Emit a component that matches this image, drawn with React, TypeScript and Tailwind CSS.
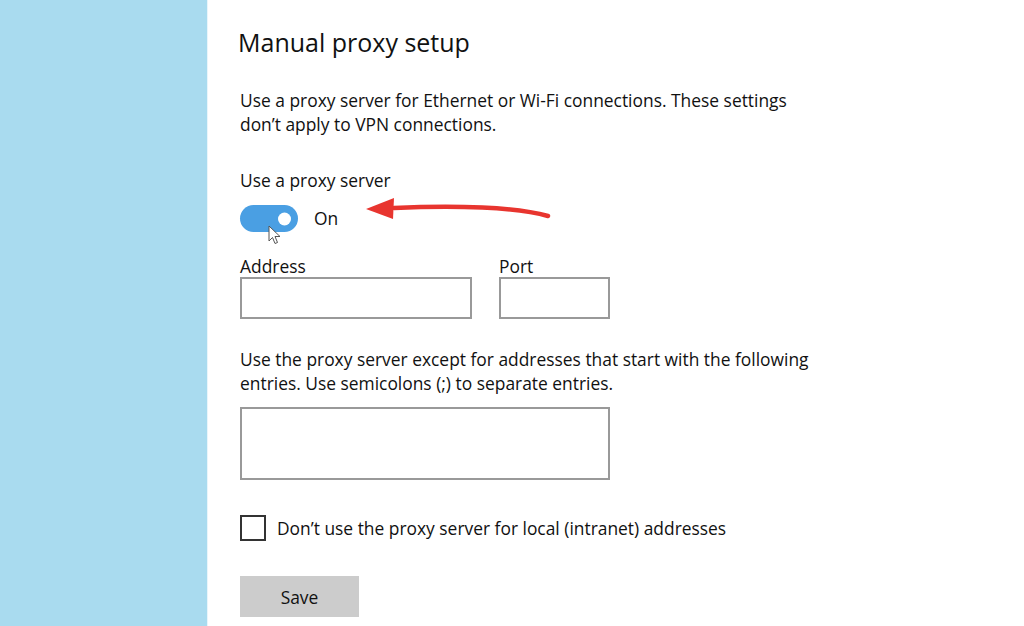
import { useState } from 'react'

const font = { fontFamily: '"Segoe UI", "Open Sans", "Noto Sans", sans-serif' }

function Toggle({ on, onChange }: { on: boolean; onChange: (v: boolean) => void }) {
  return (
    <button
      type="button"
      onClick={() => onChange(!on)}
      className={`relative flex h-[27px] w-[58px] items-center rounded-full ${on ? 'bg-[#4a9fe3]' : 'border-2 border-[#333] bg-white'}`}
    >
      <span
        className={`absolute top-1/2 h-[13px] w-[13px] -translate-y-1/2 rounded-full ${on ? 'right-[7px] bg-white' : 'left-[7px] bg-[#333]'}`}
      />
    </button>
  )
}

export default function App() {
  const [on, setOn] = useState(true)
  const [local, setLocal] = useState(false)

  return (
    <div className="flex h-[626px] w-[1024px] overflow-hidden bg-white text-[#111]" style={font}>
      <div className="h-full w-[207px] shrink-0 bg-[#a9dbef]" />
      <div className="h-full w-[1px] shrink-0 bg-[#e8f5fb]" />
      <main className="relative flex flex-1 flex-col pl-[30px] pt-[24px]">
        <h1 className="text-[25px] leading-[36px] font-normal">Manual proxy setup</h1>

        <p className="mt-[28px] ml-[2px] w-[560px] text-[17.4px] leading-[24px]">
          Use a proxy server for Ethernet or Wi-Fi connections. These settings don’t apply to VPN connections.
        </p>

        <div className="mt-[32px] ml-[2px] text-[17.4px] leading-[24px]">Use a proxy server</div>
        <div className="mt-[13px] ml-[2px] flex items-center gap-[16px]">
          <Toggle on={on} onChange={setOn} />
          <span className="text-[17.4px]">{on ? 'On' : 'Off'}</span>
        </div>

        <div className="mt-[23px] ml-[2px] flex gap-[27px]">
          <label className="flex flex-col">
            <span className="text-[17.4px] leading-[22px]">Address</span>
            <input className="h-[42px] w-[232px] border-2 border-[#999] bg-white px-2 outline-none" />
          </label>
          <label className="flex flex-col">
            <span className="text-[17.4px] leading-[22px]">Port</span>
            <input className="h-[42px] w-[111px] border-2 border-[#999] bg-white px-2 outline-none" />
          </label>
        </div>

        <p className="mt-[28px] ml-[2px] w-[590px] text-[17.4px] leading-[24px]">
          Use the proxy server except for addresses that start with the following entries. Use semicolons (;) to separate entries.
        </p>
        <textarea className="mt-[12px] ml-[2px] h-[73px] w-[370px] resize-none border-2 border-[#999] bg-white outline-none" />

        <label className="mt-[35px] ml-[2px] flex items-center gap-[11px]">
          <button
            type="button"
            onClick={() => setLocal(!local)}
            className="flex h-[26px] w-[26px] items-center justify-center border-2 border-[#333] bg-white"
          >
            {local && <span className="text-sm leading-none">✓</span>}
          </button>
          <span className="text-[17.4px]">Don’t use the proxy server for local (intranet) addresses</span>
        </label>

        <button
          type="button"
          className="mt-[35px] ml-[2px] h-[41px] w-[119px] bg-[#cccccc] text-[17.4px] text-[#111]"
        >
          Save
        </button>

        {/* red annotation arrow pointing at the toggle */}
        <svg className="pointer-events-none absolute left-[148px] top-[193px]" width="210" height="32" viewBox="0 0 210 32">
          <path d="M192 23 C 160 14, 100 12, 38 15" fill="none" stroke="#e8352f" strokeWidth="4.5" strokeLinecap="round" />
          <path d="M10 16 L 38 5 L 37 26 Z" fill="#e8352f" />
        </svg>

        {/* mouse pointer */}
        <svg className="pointer-events-none absolute left-[60px] top-[225px]" width="14" height="22" viewBox="0 0 14 22">
          <path d="M1 1 L1 16 L4.5 12.5 L7 18.5 L9.5 17.5 L7 11.5 L12 11.5 Z" fill="#fff" stroke="#555" strokeWidth="1" strokeLinejoin="round" />
        </svg>
      </main>
    </div>
  )
}
